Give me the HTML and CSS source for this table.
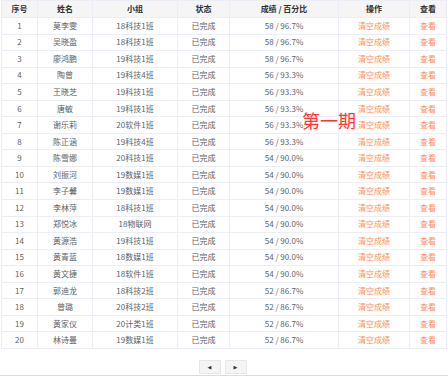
FILE: index.html
```html
<!DOCTYPE html>
<html lang="zh-CN">
<head>
<meta charset="utf-8">
<link rel="stylesheet" href="styles.css">
</head>
<body>
<div class="page">
  <table class="grid">
    <colgroup>
      <col class="c1"><col class="c2"><col class="c3"><col class="c4"><col class="c5"><col class="c6"><col class="c7">
    </colgroup>
    <thead>
      <tr><th>序号</th><th>姓名</th><th>小组</th><th>状态</th><th>成绩 / 百分比</th><th>操作</th><th>查看</th></tr>
    </thead>
    <tbody>
      <tr><td>1</td><td>莫李雯</td><td>18科技1班</td><td>已完成</td><td>58 / 96.7%</td><td class="link">清空成绩</td><td class="link">查看</td></tr>
      <tr><td>2</td><td>吴晓盈</td><td>18科技1班</td><td>已完成</td><td>58 / 96.7%</td><td class="link">清空成绩</td><td class="link">查看</td></tr>
      <tr><td>3</td><td>廖鸿鹏</td><td>19科技1班</td><td>已完成</td><td>58 / 96.7%</td><td class="link">清空成绩</td><td class="link">查看</td></tr>
      <tr><td>4</td><td>陶曾</td><td>19科技4班</td><td>已完成</td><td>56 / 93.3%</td><td class="link">清空成绩</td><td class="link">查看</td></tr>
      <tr><td>5</td><td>王晓芝</td><td>19科技1班</td><td>已完成</td><td>56 / 93.3%</td><td class="link">清空成绩</td><td class="link">查看</td></tr>
      <tr><td>6</td><td>唐敏</td><td>19科技1班</td><td>已完成</td><td>56 / 93.3%</td><td class="link">清空成绩</td><td class="link">查看</td></tr>
      <tr><td>7</td><td>谢乐莉</td><td>20软件1班</td><td>已完成</td><td>56 / 93.3%</td><td class="link">清空成绩</td><td class="link">查看</td></tr>
      <tr><td>8</td><td>陈正涵</td><td>19科技4班</td><td>已完成</td><td>56 / 93.3%</td><td class="link">清空成绩</td><td class="link">查看</td></tr>
      <tr><td>9</td><td>陈雪娜</td><td>20科技1班</td><td>已完成</td><td>54 / 90.0%</td><td class="link">清空成绩</td><td class="link">查看</td></tr>
      <tr><td>10</td><td>刘振河</td><td>19数媒1班</td><td>已完成</td><td>54 / 90.0%</td><td class="link">清空成绩</td><td class="link">查看</td></tr>
      <tr><td>11</td><td>李子馨</td><td>19数媒1班</td><td>已完成</td><td>54 / 90.0%</td><td class="link">清空成绩</td><td class="link">查看</td></tr>
      <tr><td>12</td><td>李林萍</td><td>18科技1班</td><td>已完成</td><td>54 / 90.0%</td><td class="link">清空成绩</td><td class="link">查看</td></tr>
      <tr><td>13</td><td>郑悦冰</td><td>18物联网</td><td>已完成</td><td>54 / 90.0%</td><td class="link">清空成绩</td><td class="link">查看</td></tr>
      <tr><td>14</td><td>黄源浩</td><td>19科技1班</td><td>已完成</td><td>54 / 90.0%</td><td class="link">清空成绩</td><td class="link">查看</td></tr>
      <tr><td>15</td><td>黄青蓝</td><td>18数媒1班</td><td>已完成</td><td>54 / 90.0%</td><td class="link">清空成绩</td><td class="link">查看</td></tr>
      <tr><td>16</td><td>黄文捷</td><td>18软件1班</td><td>已完成</td><td>54 / 90.0%</td><td class="link">清空成绩</td><td class="link">查看</td></tr>
      <tr><td>17</td><td>郭迪龙</td><td>18科技2班</td><td>已完成</td><td>52 / 86.7%</td><td class="link">清空成绩</td><td class="link">查看</td></tr>
      <tr><td>18</td><td>曾璐</td><td>20科技2班</td><td>已完成</td><td>52 / 86.7%</td><td class="link">清空成绩</td><td class="link">查看</td></tr>
      <tr><td>19</td><td>黄家仪</td><td>20计类1班</td><td>已完成</td><td>52 / 86.7%</td><td class="link">清空成绩</td><td class="link">查看</td></tr>
      <tr><td>20</td><td>林诗曼</td><td>19数媒1班</td><td>已完成</td><td>52 / 86.7%</td><td class="link">清空成绩</td><td class="link">查看</td></tr>
    </tbody>
  </table>
  <div class="pager">
    <button class="pbtn">&#9664;</button>
    <button class="pbtn">&#9654;</button>
  </div>
  <div class="period">第一期</div>
</div>
</body>
</html>
```
FILE: styles.css
```css
html, body {
  margin: 0;
  padding: 0;
  background: #fff;
}
.page {
  position: relative;
  width: 448px;
  height: 376px;
  box-sizing: border-box;
  padding-left: 1px;
  border-bottom: 1px solid #dcdcdc;
  font-family: "Noto Sans CJK SC", "Noto Sans", sans-serif;
  font-size: 8px;
  color: #606266;
}
.grid {
  border-collapse: collapse;
  table-layout: fixed;
  width: 445px;
}
.c1 { width: 36px; }
.c2 { width: 55px; }
.c3 { width: 85px; }
.c4 { width: 52px; }
.c5 { width: 109px; }
.c6 { width: 71px; }
.c7 { width: 37px; }
.grid th, .grid td {
  border: 1px solid #ebeef5;
  text-align: center;
  padding: 0;
  line-height: 1;
  white-space: nowrap;
}
.grid th {
  height: 16px;
  background: #f5f5f5;
  color: #303133;
  font-weight: bold;
}
.grid td {
  height: 15.55px;
}
.grid td.link {
  color: #ff8d5e;
}
.pager {
  display: flex;
  justify-content: center;
  gap: 4px;
  margin-top: 11px;
  padding-right: 4px;
}
.pbtn {
  width: 22px;
  height: 14px;
  padding: 0;
  border: 1px solid #e6e6e6;
  border-radius: 1px;
  background: #f4f4f5;
  color: #333;
  font-size: 5px;
  line-height: 12px;
  font-family: "DejaVu Sans", sans-serif;
}
.period {
  position: absolute;
  left: 302px;
  top: 111px;
  font-size: 18px;
  line-height: 1;
  color: #ff3535;
}
```
